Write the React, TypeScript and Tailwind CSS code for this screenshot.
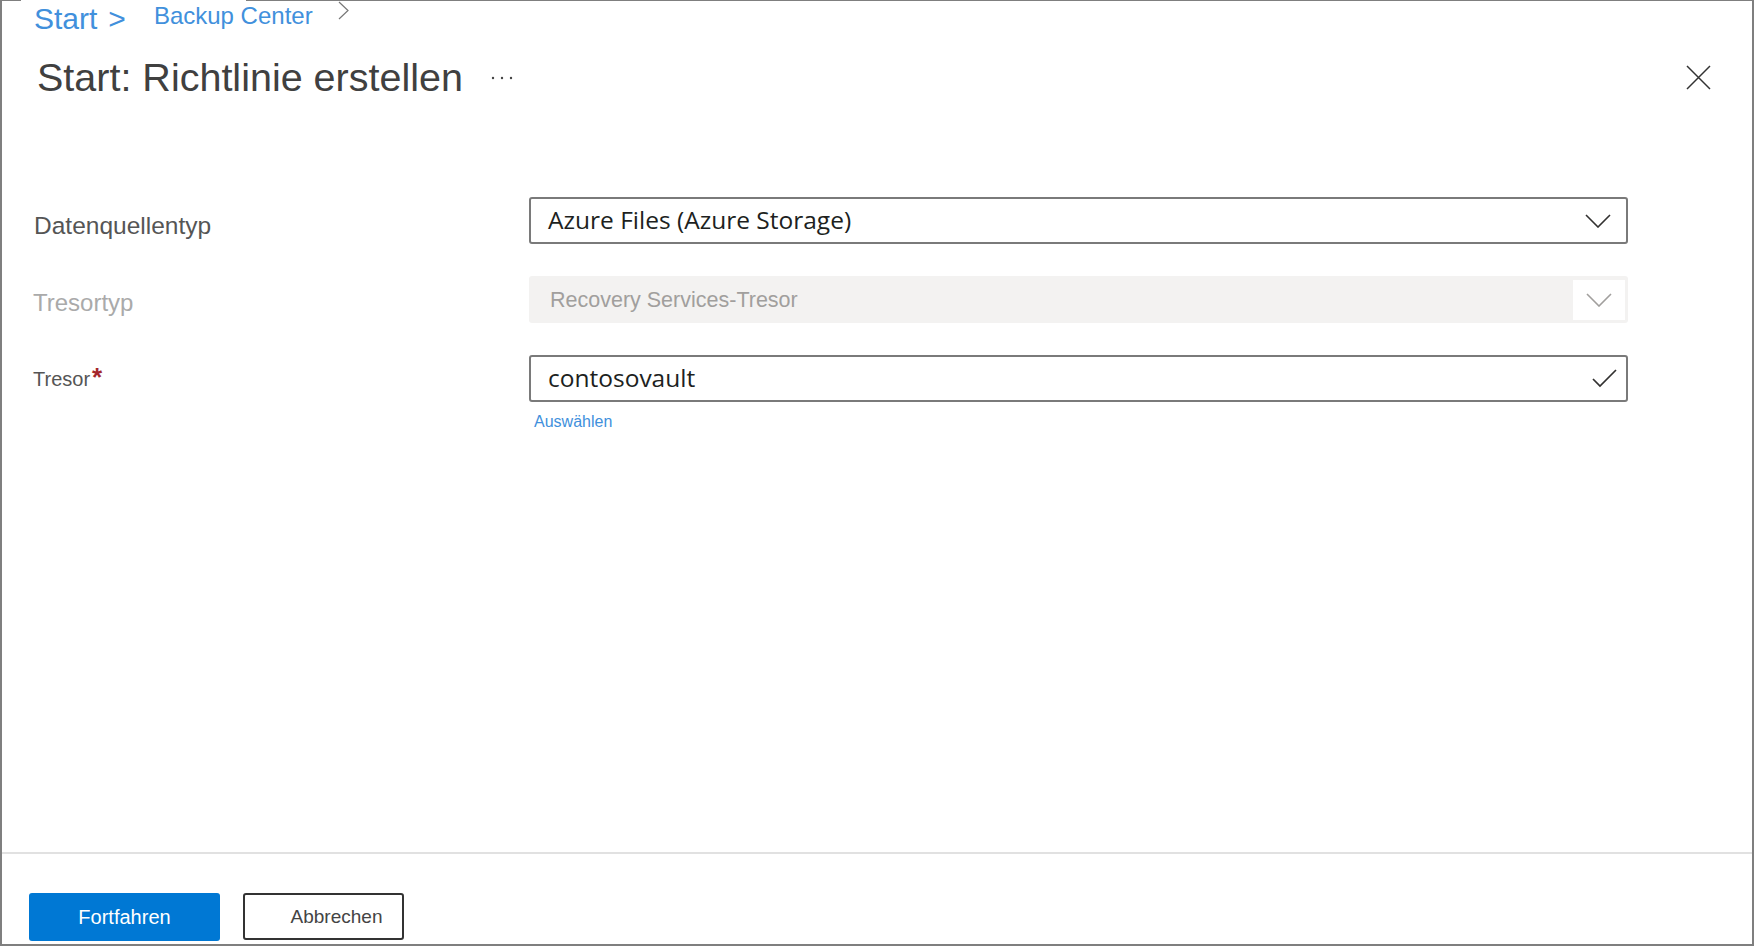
const ChevronDown = ({ color }: { color: string }) => (
  <svg width="26" height="14" viewBox="0 0 26 14" fill="none">
    <polyline points="1,1 13,13 25,1" stroke={color} strokeWidth="1.6" />
  </svg>
);

export default function App() {
  return (
    <div className="w-[1754px] h-[946px] bg-white flex flex-col border-l-2 border-r-2 border-b-2 border-[#7f7f7f] font-['Liberation_Sans',Arial,sans-serif] overflow-hidden">
      {/* top edge, broken where the breadcrumb sits */}
      <div className="flex h-[1px] shrink-0">
        <div className="w-[19px] bg-[#7f7f7f]" />
        <div className="w-[225px]" />
        <div className="flex-1 bg-[#7f7f7f]" />
      </div>

      {/* breadcrumb */}
      <div className="flex items-start pl-[32px] pt-[3px] h-[33px] shrink-0 text-[#4190dc]">
        <span className="text-[30px] leading-[30px]">Start</span>
        <span className="ml-[11px] text-[30px] leading-[30px]">&gt;</span>
        <span className="ml-[28px] text-[24px] leading-[24px]">Backup Center</span>
        <svg className="ml-[25px] -mt-[3px]" width="12" height="19" viewBox="0 0 12 19" fill="none">
          <polyline points="1,1 10,9.5 1,18" stroke="#777" strokeWidth="1.2" />
        </svg>
      </div>

      {/* title */}
      <div className="flex items-center justify-between pl-[35px] pr-[41px] mt-[24px] shrink-0">
        <div className="flex items-center">
          <h1 className="text-[39.5px] leading-[39px] text-[#404040]">Start: Richtlinie erstellen</h1>
          <svg className="ml-[28px]" width="22" height="4" viewBox="0 0 22 4">
            <circle cx="2" cy="2" r="1.2" fill="#444" />
            <circle cx="11" cy="2" r="1.2" fill="#444" />
            <circle cx="20" cy="2" r="1.2" fill="#444" />
          </svg>
        </div>
        <svg width="25" height="25" viewBox="0 0 25 25" fill="none">
          <path d="M1 1 L24 24 M24 1 L1 24" stroke="#333" strokeWidth="1.5" />
        </svg>
      </div>

      {/* form */}
      <div className="flex-1 flex flex-col pl-[31px] pt-[100px]">
        <div className="flex">
          <div className="w-[496px] pt-[17px] pl-[1px] text-[24.5px] leading-[24px] text-[#555]">Datenquellentyp</div>
          <div className="w-[1099px] h-[47px] border-2 border-[#7a7a7a] rounded-[3px] flex items-center justify-between pl-[17px] pr-[15px]">
            <span className="font-['Open_Sans',sans-serif] text-[24.5px] leading-[24.5px] text-[#201f1e]">Azure Files (Azure Storage)</span>
            <ChevronDown color="#323130" />
          </div>
        </div>

        <div className="flex mt-[32px]">
          <div className="w-[496px] pt-[15px] text-[24px] leading-[24px] text-[#aaaaaa]">Tresortyp</div>
          <div className="w-[1099px] h-[47px] bg-[#f3f2f1] rounded-[3px] flex items-center justify-between pl-[21px] pr-[3px]">
            <span className="mt-[3px] text-[21.5px] leading-[21.5px] text-[#a19f9d]">Recovery Services-Tresor</span>
            <div className="w-[52px] h-[40px] bg-white flex items-center justify-center">
              <ChevronDown color="#a19f9d" />
            </div>
          </div>
        </div>

        <div className="flex mt-[32px]">
          <div className="w-[496px] pt-[12px] text-[20px] leading-[20px] text-[#555]">
            Tresor<span className="ml-[2px] text-[#a4262c] text-[26px] leading-[20px] font-bold">*</span>
          </div>
          <div className="flex flex-col">
            <div className="w-[1099px] h-[47px] border-2 border-[#7a7a7a] rounded-[3px] flex items-center justify-between pl-[17px] pr-[9px]">
              <span className="font-['Open_Sans',sans-serif] text-[24.5px] leading-[24.5px] text-[#201f1e]">contosovault</span>
              <svg width="25" height="19" viewBox="0 0 25 19" fill="none">
                <polyline points="1,10 8,17 24,1" stroke="#323130" strokeWidth="1.7" />
              </svg>
            </div>
            <span className="ml-[5px] mt-[12px] text-[16px] leading-[16px] text-[#4190dc]">Auswählen</span>
          </div>
        </div>
      </div>

      {/* footer */}
      <div className="h-[2px] bg-[#e1e1e1] shrink-0" />
      <div className="h-[90px] shrink-0 flex items-start gap-[23px] pl-[27px] pt-[39px]">
        <button className="w-[191px] h-[48px] bg-[#0078d4] rounded-[3px] text-white text-[20px] leading-[20px]">Fortfahren</button>
        <button className="w-[161px] h-[47px] border-2 border-[#333] rounded-[3px] text-[#444] text-[19px] leading-[19px] pl-[26px]">Abbrechen</button>
      </div>
    </div>
  );
}
